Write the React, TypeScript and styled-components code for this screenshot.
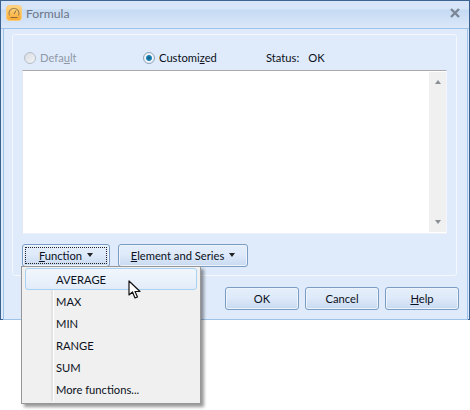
import * as React from 'react';
import styled, { createGlobalStyle } from 'styled-components';

const GlobalStyle = createGlobalStyle`
  html, body {
    margin: 0;
    padding: 0;
    background: #fff;
  }
  * {
    box-sizing: border-box;
  }
`;

const Page = styled.div`
  position: relative;
  width: 470px;
  height: 410px;
  overflow: hidden;
  font-family: Lato, 'Noto Sans', sans-serif;
  font-size: 11.2px;
  color: #0a1020;
`;

const Window = styled.div`
  width: 470px;
  height: 320px;
  display: flex;
  flex-direction: column;
  border: 1px solid #3a6290;
  border-top-color: #3d6591;
  background: #dfebfb;
`;

const TitleBar = styled.div`
  height: 28px;
  flex: none;
  display: flex;
  align-items: center;
  padding: 0 9px 3px 5px;
  border-bottom: 1px solid #9dc3ea;
  background: linear-gradient(#d6e5f8 0, #d6e5f8 8px, #c5daf3 9px, #dbe8f9 100%);
`;

const TitleText = styled.span`
  margin-left: 4px;
  font-size: 12.2px;
  color: #6c7686;
  flex: 1;
`;

const Body = styled.div`
  flex: 1;
  display: flex;
  flex-direction: column;
  padding: 5px 10px 9px 2px;
  margin-left: 2px;
  border-left: 1px solid #9dc3ea;
  border-right: 1px solid #9dc3ea;
  margin-right: 1px;
  margin-bottom: 1px;
  border-bottom: 1px solid #9dc3ea;
`;

const Panel = styled.div`
  height: 242px;
  margin: 0 0 0 6px;
  padding: 0 9px;
  width: 445px;
  background: #dfebfb;
  border: 1px solid #f4f8fd;
  border-radius: 3px;
  display: flex;
  flex-direction: column;
`;

const OptionRow = styled.div`
  height: 35px;
  display: flex;
  align-items: center;
  padding: 10px 0 0 1px;
`;

const Option = styled.label<{ $width: number; $disabled?: boolean }>`
  width: ${(p) => p.$width}px;
  display: flex;
  align-items: center;
  gap: 4px;
  color: ${(p) => (p.$disabled ? '#8f99a6' : '#0a1020')};
`;

const Radio = styled.span<{ $checked?: boolean; $disabled?: boolean }>`
  width: 12px;
  height: 12px;
  margin-left: 1px;
  border-radius: 50%;
  flex: none;
  border: 1px solid ${(p) => (p.$disabled ? '#b5bdc7' : '#8fa3bb')};
  background: ${(p) =>
    p.$checked
      ? 'radial-gradient(circle, #0f5a86 0, #1e86b4 2.5px, #f2f6fb 3.5px, #dfe7f1 100%)'
      : 'linear-gradient(135deg, #d8dce1, #f3f4f6)'};
`;

const StatusText = styled.span`
  display: flex;
  gap: 9px;
  margin-left: 1px;
`;

const EditorBox = styled.div`
  height: 164px;
  display: flex;
  justify-content: flex-end;
  background: #fff;
  border-top: 1px solid #aaa9ad;
  border-left: 1px solid #e4e8ee;
  border-right: 1px solid #f2f5fa;
  border-bottom: 1px solid #eef2f8;
`;

const ScrollBar = styled.div`
  width: 17px;
  margin: 1px 0;
  background: #f0f0f0;
  display: flex;
  flex-direction: column;
  justify-content: space-between;
  align-items: center;
  padding: 8px 0;
`;

const Arrow = styled.span<{ $up?: boolean; $color?: string }>`
  width: 0;
  height: 0;
  border-left: 3.5px solid transparent;
  border-right: 3.5px solid transparent;
  ${(p) =>
    p.$up
      ? `border-bottom: 4px solid ${p.$color ?? '#8a8f96'};`
      : `border-top: 4px solid ${p.$color ?? '#8a8f96'};`}
`;

const ToolRow = styled.div`
  display: flex;
  gap: 8px;
  margin-top: 10px;
`;

const Button = styled.button<{ $width: number; $focused?: boolean }>`
  position: relative;
  width: ${(p) => p.$width}px;
  height: 23px;
  padding: 0 0 1px;
  display: flex;
  align-items: center;
  justify-content: center;
  gap: 5px;
  font: inherit;
  color: #0a1020;
  border: 1px solid #7a9cc2;
  border-radius: 3px;
  background: linear-gradient(#e4eefb 0, #dfeafa 45%, #c8daf1 100%);
  box-shadow: inset 0 0 0 1px #eef4fc;
  ${(p) =>
    p.$focused
      ? `
    &::after {
      content: '';
      position: absolute;
      inset: 2px;
      border: 1px dotted #222;
    }`
      : ''}
`;

const Accel = styled.span`
  text-decoration: underline;
`;

const Footer = styled.div`
  display: flex;
  justify-content: flex-end;
  gap: 6px;
  margin-top: 11px;
  margin-right: -2px;
`;

const Menu = styled.div`
  position: absolute;
  left: 21px;
  top: 266px;
  width: 180px;
  height: 138px;
  padding: 1px 3px;
  background: #f0f0f0;
  border: 1px solid #979797;
  box-shadow: 3px 3px 3px rgba(0, 0, 0, 0.4);
  display: flex;
  flex-direction: column;
  &::before {
    content: '';
    position: absolute;
    left: 29px;
    top: 2px;
    bottom: 2px;
    width: 2px;
    background: #e2e3e3;
    border-right: 1px solid #fff;
  }
`;

const MenuItem = styled.div<{ $active?: boolean }>`
  position: relative;
  height: 22px;
  flex: none;
  display: flex;
  align-items: center;
  padding-left: 30px;
  border: 1px solid ${(p) => (p.$active ? '#a8d2f2' : 'transparent')};
  border-radius: 3px;
  background: ${(p) => (p.$active ? 'linear-gradient(#f2f6fc, #e2ecf9)' : 'transparent')};
`;

const Cursor = styled.svg`
  position: absolute;
  left: 128px;
  top: 280px;
`;

const Gauge = () => (
  <svg width="16" height="16" viewBox="0 0 16 16">
    <defs>
      <linearGradient id="gaugeFill" x1="0" y1="0" x2="0" y2="1">
        <stop offset="0" stopColor="#fdd889" />
        <stop offset="1" stopColor="#fba92e" />
      </linearGradient>
    </defs>
    <rect x="0.5" y="0.5" width="15" height="15" rx="3" fill="url(#gaugeFill)" stroke="#fbcb7c" />
    <path d="M3.5 10.5a5 5 0 1 1 9 0" fill="none" stroke="#a0814f" strokeWidth="1.1" />
    <path d="M8 9 10 5.5M4.5 12.5h7" stroke="#8a6a3c" strokeWidth="1" fill="none" />
  </svg>
);

const CloseIcon = () => (
  <svg width="10" height="10" viewBox="0 0 10 10">
    <path d="M1 1 9 9M9 1 1 9" stroke="#7b8796" strokeWidth="2.4" fill="none" />
  </svg>
);

const functions = ['AVERAGE', 'MAX', 'MIN', 'RANGE', 'SUM', 'More functions...'];

function App() {
  return (
    <Page>
      <GlobalStyle />
      <Window>
        <TitleBar>
          <Gauge />
          <TitleText>Formula</TitleText>
          <CloseIcon />
        </TitleBar>
        <Body>
          <Panel>
            <OptionRow>
              <Option $width={119} $disabled>
                <Radio $disabled />
                <span>
                  Defa<Accel>u</Accel>lt
                </span>
              </Option>
              <Option $width={123}>
                <Radio $checked />
                <span>
                  Customi<Accel>z</Accel>ed
                </span>
              </Option>
              <StatusText>
                <span>Status:</span>
                <span>OK</span>
              </StatusText>
            </OptionRow>
            <EditorBox>
              <ScrollBar>
                <Arrow $up />
                <Arrow />
              </ScrollBar>
            </EditorBox>
            <ToolRow>
              <Button $width={88} $focused>
                <span>
                  <Accel>F</Accel>unction
                </span>
                <Arrow $color="#222" />
              </Button>
              <Button $width={130}>
                <span>
                  <Accel>E</Accel>lement and Series
                </span>
                <Arrow $color="#222" />
              </Button>
            </ToolRow>
          </Panel>
          <Footer>
            <Button $width={74}>OK</Button>
            <Button $width={74}>Cancel</Button>
            <Button $width={74}>
              <span>
                <Accel>H</Accel>elp
              </span>
            </Button>
          </Footer>
        </Body>
      </Window>
      <Menu>
        {functions.map((name, i) => (
          <MenuItem key={name} $active={i === 0}>
            {name}
          </MenuItem>
        ))}
      </Menu>
      <Cursor width="14" height="20" viewBox="0 0 14 20">
        <path
          d="M1 1 V15 L4.5 12 L7 18 L9.5 17 L7 11.5 H12 Z"
          fill="#fff"
          stroke="#111"
          strokeWidth="1.2"
          strokeLinejoin="round"
        />
      </Cursor>
    </Page>
  );
}

export default App;
